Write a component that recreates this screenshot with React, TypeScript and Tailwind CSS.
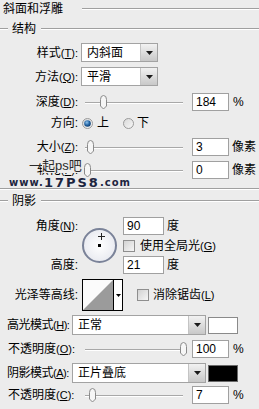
import React from "react";

const Line = ({ className = "" }: { className?: string }) => (
  <div className={`h-[2px] border-t border-[#9f9f9f] bg-white ${className}`} />
);

const Mn = ({ k }: { k: string }) => (
  <span className="text-[11px]">
    (<u>{k}</u>):
  </span>
);

const Arrow = () => (
  <div className="w-[17px] h-full border-l border-[#c4c4c4] bg-linear-to-b from-[#f2f2f2] to-[#c8c8c8] flex items-center justify-center">
    <svg width="7" height="4" viewBox="0 0 7 4">
      <path d="M0 0h7L3.5 4z" fill="#1a1a1a" />
    </svg>
  </div>
);

const Select = ({ text, className }: { text: string; className: string }) => (
  <div className={`flex h-full border border-[#a3a3a3] bg-white ${className}`}>
    <div className="flex-1 pl-[5px] flex items-center">{text}</div>
    <Arrow />
  </div>
);

const Num = ({ v, className = "w-[37px]" }: { v: string; className?: string }) => (
  <div className={`h-[18px] border border-[#a0a0a0] bg-white pl-[3px] flex items-center ${className}`}>{v}</div>
);

const Slider = ({ thumb }: { thumb: number }) => (
  <div className="relative w-[98px] h-[18px]">
    <div className="absolute left-0 right-0 top-[9px] h-[1px] bg-[#a8a8a8]" />
    <div className="absolute left-0 right-0 top-[10px] h-[1px] bg-white" />
    <svg className="absolute top-[2px]" style={{ left: thumb }} width="9" height="15" viewBox="0 0 9 15">
      <path d="M1.5 4.5Q1.5 0.5 4.5 0.5Q7.5 0.5 7.5 4.5V11L4.5 14L1.5 11Z" fill="#f6f6f6" stroke="#8a8a8a" />
    </svg>
  </div>
);

const Check = () => (
  <div className="w-[12px] h-[12px] border border-[#8e8e8e] bg-linear-to-br from-[#d2d2d2] to-[#f6f6f6]" />
);

const Radio = ({ on }: { on?: boolean }) => (
  <svg width="11" height="11" viewBox="0 0 11 11">
    <defs>
      <radialGradient id="rb" cx="0.4" cy="0.35" r="0.7">
        <stop offset="0" stopColor="#8ec3ee" />
        <stop offset="0.6" stopColor="#1f5f9e" />
        <stop offset="1" stopColor="#0d3a6a" />
      </radialGradient>
      <linearGradient id="rg" x1="0" y1="0" x2="1" y2="1">
        <stop offset="0" stopColor="#d8d8d8" />
        <stop offset="1" stopColor="#f8f8f8" />
      </linearGradient>
    </defs>
    <circle cx="5.5" cy="5.5" r="5" fill="url(#rg)" stroke="#9a9a9a" />
    {on && <circle cx="5.5" cy="5.5" r="3.3" fill="url(#rb)" />}
  </svg>
);

export default function App() {
  return (
    <div className="relative w-[259px] h-[409px] overflow-hidden bg-[#ececec] text-black text-[12px] leading-[14px] font-['Liberation_Sans','Noto_Sans_CJK_SC',sans-serif]">
      {/* title */}
      <div className="h-[17px] flex items-center">
        <span className="ml-[3px]">斜面和浮雕</span>
        <Line className="ml-[19px] flex-1" />
      </div>

      {/* 结构 header */}
      <div className="h-[16px] mt-[4px] flex items-center">
        <Line className="w-[8px]" />
        <span className="ml-[4px]">结构</span>
        <Line className="ml-[5px] flex-1" />
      </div>

      <div className="flex items-center h-[19px] mt-[6px]">
        <div className="w-[80px] text-right pr-[2px]">样式<Mn k="T" /></div>
        <Select text="内斜面" className="ml-[1px] w-[77px]" />
      </div>
      <div className="flex items-center h-[19px] mt-[5px]">
        <div className="w-[80px] text-right pr-[2px]">方法<Mn k="Q" /></div>
        <Select text="平滑" className="ml-[1px] w-[77px]" />
      </div>

      <div className="flex items-center h-[18px] mt-[7px]">
        <div className="w-[80px] text-right pr-[2px]">深度<Mn k="D" /></div>
        <div className="ml-[5px]"><Slider thumb={14} /></div>
        <Num v="184" className="ml-[9px] w-[37px]" />
        <span className="ml-[4px]">%</span>
      </div>

      <div className="flex items-center h-[14px] mt-[5px]">
        <div className="w-[80px] text-right pr-[2px]">方向:</div>
        <div className="ml-[2px] flex items-center"><Radio on /></div>
        <span className="ml-[4px]">上</span>
        <div className="ml-[14px] flex items-center"><Radio /></div>
        <span className="ml-[3px]">下</span>
      </div>

      <div className="flex items-center h-[18px] mt-[8px]">
        <div className="w-[80px] text-right pr-[2px]">大小<Mn k="Z" /></div>
        <div className="ml-[5px]"><Slider thumb={1} /></div>
        <Num v="3" className="ml-[9px] w-[37px]" />
        <span className="ml-[3px]">像素</span>
      </div>

      <div className="flex items-center h-[18px] mt-[5px]">
        <div className="w-[80px] text-right pr-[2px]">软化<Mn k="F" /></div>
        <div className="ml-[5px]"><Slider thumb={-2} /></div>
        <Num v="0" className="ml-[9px] w-[37px]" />
        <span className="ml-[3px]">像素</span>
      </div>

      <Line className="mt-[9px]" />

      {/* 阴影 header */}
      <div className="h-[16px] mt-[3px] flex items-center">
        <Line className="w-[8px]" />
        <span className="ml-[4px]">阴影</span>
        <Line className="ml-[5px] flex-1" />
      </div>

      {/* angle block */}
      <div className="flex mt-[8px] h-[57px]">
        <div className="w-[80px] flex flex-col justify-between">
          <div className="h-[18px] flex items-center justify-end pr-[2px]">角度<Mn k="N" /></div>
          <div className="h-[18px] flex items-center justify-end pr-[2px]">高度:</div>
        </div>
        <div className="relative ml-[2px] mt-[11px] w-[35px] h-[35px] rounded-full border-[2px] border-[#7a8298] bg-radial from-[#ffffff] to-[#e2e4ec]">
          <div className="absolute left-[14px] top-[6px] w-[7px] h-[1px] bg-[#222]" />
          <div className="absolute left-[17px] top-[3px] w-[1px] h-[7px] bg-[#222]" />
          <div className="absolute left-[14px] top-[14px] w-[3px] h-[3px] bg-black" />
        </div>
        <div className="ml-[6px] flex flex-col">
          <div className="flex items-center h-[18px]">
            <Num v="90" className="w-[41px]" />
            <span className="ml-[3px]">度</span>
          </div>
          <div className="flex items-center mt-[5px] h-[12px]">
            <Check />
            <span className="ml-[5px]">使用全局光<span className="text-[11px]">(<u>G</u>)</span></span>
          </div>
          <div className="flex items-center mt-[4px] h-[18px]">
            <Num v="21" className="w-[41px]" />
            <span className="ml-[3px]">度</span>
          </div>
        </div>
      </div>

      {/* contour */}
      <div className="flex items-center h-[32px] mt-[5px]">
        <div className="w-[80px] text-right pr-[2px]">光泽等高线:</div>
        <div className="ml-[2px] w-[41px] h-[32px] border border-black bg-white flex">
          <svg width="30" height="30" viewBox="0 0 30 30" className="shrink-0">
            <rect width="30" height="30" fill="#fbfbfb" />
            <path d="M0 30L30 0V30Z" fill="#9b9b9b" />
          </svg>
          <div className="flex-1 border-l border-black flex items-center justify-center">
            <svg width="5" height="3" viewBox="0 0 5 3">
              <path d="M0 0h5L2.5 3z" fill="#000" />
            </svg>
          </div>
        </div>
        <div className="ml-[14px]"><Check /></div>
        <span className="ml-[4px]">消除锯齿<span className="text-[11px]">(<u>L</u>)</span></span>
      </div>

      <div className="flex items-center h-[20px] mt-[4px]">
        <div className="w-[72px] pl-[7px] whitespace-nowrap tracking-[-0.5px]">高光模式<Mn k="H" /></div>
        <Select text="正常" className="w-[134px]" />
        <div className="ml-[2px] w-[30px] h-[17px] border border-[#8a8a8a] bg-white" />
      </div>

      <div className="flex items-center h-[18px] mt-[5px]">
        <div className="w-[80px] pl-[8px] whitespace-nowrap">不透明度<Mn k="O" /></div>
        <div className="ml-[5px]"><Slider thumb={94} /></div>
        <Num v="100" className="ml-[9px] w-[37px]" />
        <span className="ml-[4px]">%</span>
      </div>

      <div className="flex items-center h-[20px] mt-[5px]">
        <div className="w-[72px] pl-[7px] whitespace-nowrap tracking-[-0.5px]">阴影模式<Mn k="A" /></div>
        <Select text="正片叠底" className="w-[134px]" />
        <div className="ml-[2px] w-[30px] h-[17px] border border-[#6a6a6a] bg-black" />
      </div>

      <div className="flex items-center h-[18px] mt-[3px]">
        <div className="w-[80px] pl-[8px] whitespace-nowrap">不透明度<Mn k="C" /></div>
        <div className="ml-[5px]"><Slider thumb={3} /></div>
        <Num v="7" className="ml-[9px] w-[37px]" />
        <span className="ml-[4px]">%</span>
      </div>

      {/* watermark overlay */}
      <div className="absolute left-[29px] top-[159px] flex items-center text-[13px] leading-[14px] text-[#2a2a2a]">
        <span>一</span>
        <span className="bg-[#ececec] pr-[1px]">起ps吧</span>
      </div>
      <div className="absolute left-[9px] top-[177px] flex items-end font-['DejaVu_Sans',sans-serif] font-bold text-[#1c2540] leading-[12px]">
        <span className="text-[10px] tracking-[1px]">www.</span>
        <span className="text-[13px] tracking-[2px]">17PS8</span>
        <span className="text-[10px] tracking-[1px]">.com</span>
      </div>
    </div>
  );
}
